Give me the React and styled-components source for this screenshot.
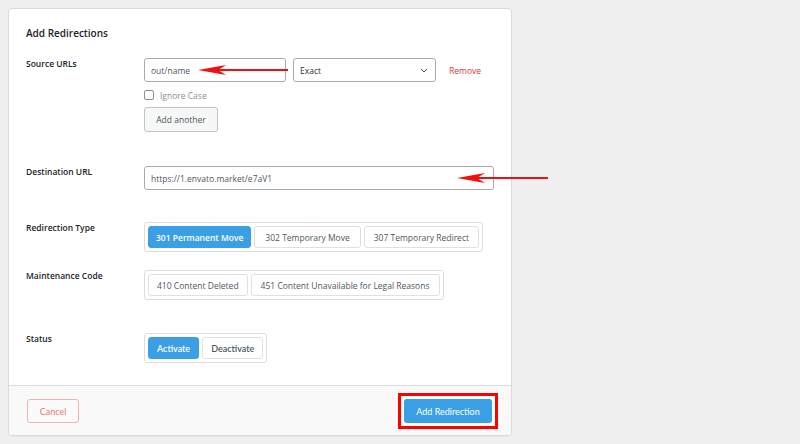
import styled, { createGlobalStyle } from 'styled-components';

const GlobalStyle = createGlobalStyle`
    html, body {
        margin: 0;
        padding: 0;
        background: #f0f0f1;
    }
    body {
        font-family: "Open Sans", "Noto Sans", sans-serif;
        color: #1d2327;
    }
`;

const Page = styled.div`
    position: relative;
    width: 800px;
    height: 444px;
    padding: 8px 0 0 8px;
    box-sizing: border-box;
`;

const Card = styled.div`
    width: 504px;
    background: #fff;
    border: 1px solid #dcdcde;
    border-radius: 4px;
    box-sizing: border-box;
    box-shadow: 0 1px 1px rgba(0, 0, 0, 0.04);
    overflow: hidden;
`;

const Body = styled.div`
    padding: 17px 18px 22px 17px;
`;

const Title = styled.h2`
    margin: 0 0 18px;
    font-size: 10px;
    line-height: 14px;
    font-weight: 600;
    color: #1d2327;
`;

const Row = styled.div`
    display: grid;
    grid-template-columns: 118px 1fr;
    margin-top: ${(p) => p.$gap || 0}px;
`;

const Label = styled.div`
    font-size: 8.5px;
    line-height: 12px;
    font-weight: 600;
    color: #1d2327;
`;

const Field = styled.div`
    display: flex;
    flex-direction: column;
    align-items: flex-start;
`;

const Line = styled.div`
    display: flex;
    align-items: center;
`;

const Input = styled.div`
    width: ${(p) => p.$width}px;
    height: 24px;
    box-sizing: border-box;
    border: 1px solid #a7aaad;
    border-radius: 3px;
    padding: 0 6px;
    display: flex;
    align-items: center;
    font-size: 8.5px;
    color: #50575e;
    background: #fff;
`;

const Select = styled(Input)`
    margin-left: 7px;
    justify-content: space-between;
    color: #2c3338;
    padding-right: 7px;
`;

const RemoveLink = styled.span`
    margin-left: 13px;
    font-size: 8.5px;
    color: #d63638;
`;

const CheckRow = styled.label`
    display: flex;
    align-items: center;
    margin-top: 8px;
    font-size: 8.5px;
    color: #8c8f94;
    height: 10px;
`;

const CheckBox = styled.span`
    width: 10px;
    height: 10px;
    box-sizing: border-box;
    border: 1px solid #8c8f94;
    border-radius: 2px;
    margin-right: 6px;
    background: #fff;
`;

const SecondaryButton = styled.button`
    margin-top: 7px;
    width: 74px;
    height: 25px;
    box-sizing: border-box;
    border: 1px solid #c3c4c7;
    border-radius: 3px;
    background: #f6f7f7;
    font-family: "Open Sans", sans-serif;
    font-size: 8.5px;
    color: #50575e;
    padding: 0;
`;

const Group = styled.div`
    display: inline-flex;
    gap: 3px;
    padding: 3px;
    border: 1px solid #dcdcde;
    border-radius: 3px;
    background: #fff;
    align-self: flex-start;
`;

const Option = styled.button`
    height: 22px;
    box-sizing: border-box;
    padding: 0 ${(p) => p.$pad || 7}px;
    border: 1px solid ${(p) => (p.$active ? '#3b9fe5' : '#e0e0e0')};
    border-radius: 3px;
    background: ${(p) => (p.$active ? '#3b9fe5' : '#fff')};
    color: ${(p) => (p.$active ? '#fff' : '#50575e')};
    font-family: ${(p) => (p.$lato ? 'Lato' : '"Open Sans"')}, sans-serif;
    font-size: ${(p) => (p.$lato ? '9px' : '8.5px')};
    font-weight: ${(p) => (p.$active || p.$lato ? 600 : 400)};
    white-space: nowrap;
`;

const Footer = styled.div`
    display: flex;
    justify-content: space-between;
    align-items: center;
    padding: 13px 13px 12px 18px;
    border-top: 1px solid #dcdcde;
    background: #f9f9f9;
`;

const CancelButton = styled.button`
    width: 52px;
    height: 24px;
    box-sizing: border-box;
    border: 1px solid #f0b4b0;
    border-radius: 3px;
    background: #fafafa;
    color: #e57c74;
    font-family: Lato, sans-serif;
    font-size: 9px;
    padding: 0;
`;

// red annotation frame drawn round the submit button in the screenshot
const Highlight = styled.span`
    display: inline-flex;
    margin: -6px 0;
    padding: 3px;
    border: 3px solid #ff0000;
    background: #fff;
`;

const PrimaryButton = styled.button`
    width: 88px;
    height: 24px;
    box-sizing: border-box;
    border: none;
    border-radius: 3px;
    background: #3b9fe5;
    color: #fff;
    font-family: Lato, sans-serif;
    font-size: 9px;
    padding: 0;
`;

const Annotations = styled.svg`
    position: absolute;
    left: 0;
    top: 0;
    pointer-events: none;
`;

const Chevron = () => (
    <svg width="8" height="5" viewBox="0 0 8 5">
        <path d="M1 1l3 3 3-3" fill="none" stroke="#50575e" strokeWidth="1" />
    </svg>
);

const Arrow = ({ x1, x2, y }) => (
    <g>
        <line x1={x1} y1={y} x2={x2 + 16} y2={y} stroke="#f01010" strokeWidth="2" />
        <polygon
            points={`${x2},${y} ${x2 + 28},${y - 5} ${x2 + 20},${y} ${x2 + 28},${y + 5}`}
            fill="#f01010"
        />
    </g>
);

export default function App() {
    return (
        <Page>
            <GlobalStyle />
            <Card>
                <Body>
                    <Title>Add Redirections</Title>

                    <Row>
                        <Label>Source URLs</Label>
                        <Field>
                            <Line>
                                <Input $width={142}>out/name</Input>
                                <Select $width={143}>
                                    <span>Exact</span>
                                    <Chevron />
                                </Select>
                                <RemoveLink>Remove</RemoveLink>
                            </Line>
                            <CheckRow>
                                <CheckBox />
                                Ignore Case
                            </CheckRow>
                            <SecondaryButton>Add another</SecondaryButton>
                        </Field>
                    </Row>

                    <Row $gap={34}>
                        <Label>Destination URL</Label>
                        <Field>
                            <Input $width={350}>https://1.envato.market/e7aV1</Input>
                        </Field>
                    </Row>

                    <Row $gap={32}>
                        <Label>Redirection Type</Label>
                        <Field>
                            <Group>
                                <Option $active $pad={7}>301 Permanent Move</Option>
                                <Option $pad={10}>302 Temporary Move</Option>
                                <Option $pad={9}>307 Temporary Redirect</Option>
                            </Group>
                        </Field>
                    </Row>

                    <Row $gap={18}>
                        <Label>Maintenance Code</Label>
                        <Field>
                            <Group>
                                <Option $pad={8}>410 Content Deleted</Option>
                                <Option $pad={9}>451 Content Unavailable for Legal Reasons</Option>
                            </Group>
                        </Field>
                    </Row>

                    <Row $gap={33}>
                        <Label>Status</Label>
                        <Field>
                            <Group>
                                <Option $active $lato $pad={8}>Activate</Option>
                                <Option $lato $pad={8}>Deactivate</Option>
                            </Group>
                        </Field>
                    </Row>
                </Body>

                <Footer>
                    <CancelButton>Cancel</CancelButton>
                    <Highlight>
                        <PrimaryButton>Add Redirection</PrimaryButton>
                    </Highlight>
                </Footer>
            </Card>

            <Annotations width="800" height="444">
                <Arrow x1={288} x2={198} y={70} />
                <Arrow x1={548} x2={457} y={178} />
            </Annotations>
        </Page>
    );
}
